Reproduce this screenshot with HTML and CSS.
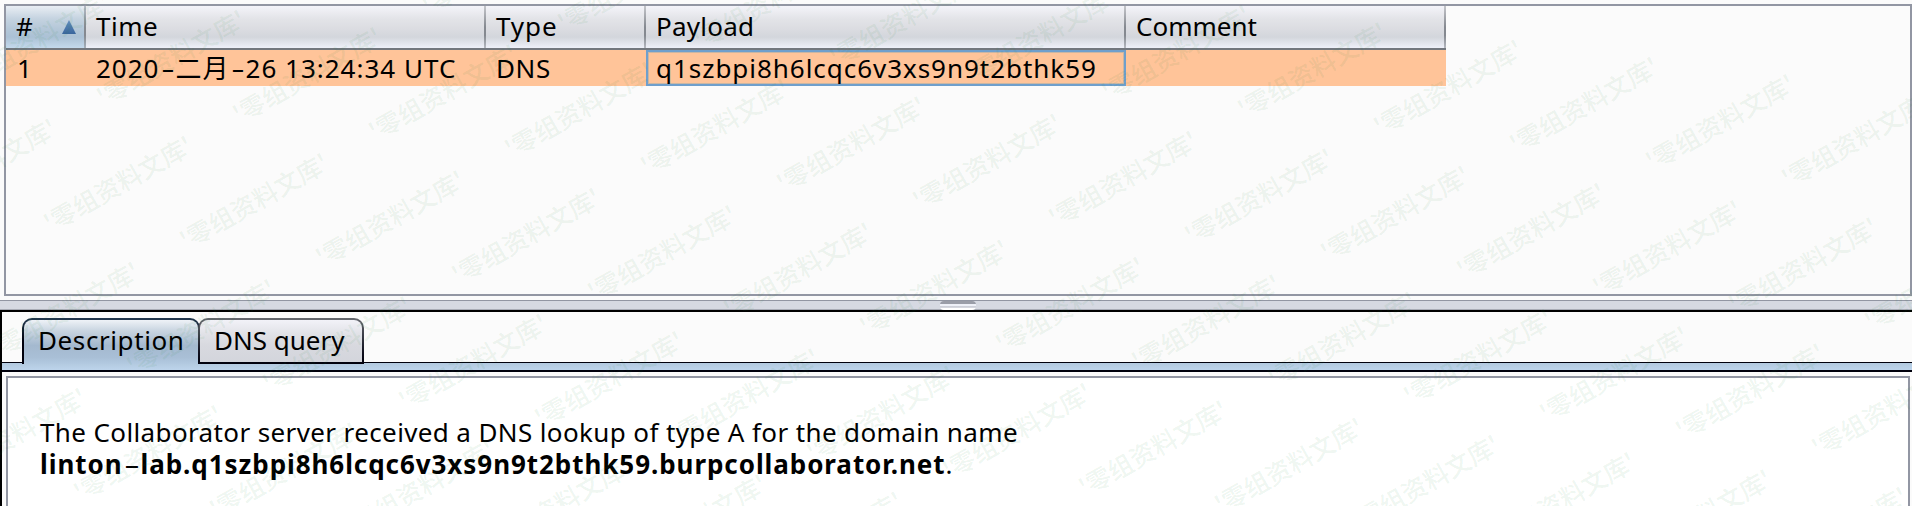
FILE: index.html
```
<!DOCTYPE html>
<html lang="en">
<head>
<meta charset="utf-8">
<title>Collaborator interactions</title>
<link rel="stylesheet" href="styles.css">
</head>
<body>
<div class="app">
  <section class="table-panel">
    <div class="grid header">
      <div class="th sorted"><span class="t-hash">#</span><svg class="sort" width="14" height="14" viewBox="0 0 14 14"><defs><linearGradient id="sg" x1="0" y1="0" x2="0" y2="1"><stop offset="0" stop-color="#6590c0"/><stop offset="1" stop-color="#39659c"/></linearGradient></defs><path d="M7 0L14 14H0Z" fill="url(#sg)"/></svg></div>
      <div class="th"><span class="t-time">Time</span></div>
      <div class="th"><span class="t-type">Type</span></div>
      <div class="th"><span class="t-payload">Payload</span></div>
      <div class="th"><span class="t-comment">Comment</span></div>
    </div>
    <div class="grid row">
      <div class="td num">1</div>
      <div class="td date">2020<span class="hyphen">-</span>二月<span class="hyphen">-</span>26 13:24:34 UTC</div>
      <div class="td t-dns">DNS</div>
      <div class="td selected">q1szbpi8h6lcqc6v3xs9n9t2bthk59</div>
      <div class="td"></div>
    </div>
  </section>
  <div class="splitter"><div class="grip"></div></div>
  <section class="detail">
    <div class="tabs">
      <div class="tab active"><span>Description</span></div>
      <div class="tab"><span>DNS query</span></div>
    </div>
    <div class="tab-band"></div>
    <div class="content">
      <p class="message">The Collaborator server received a DNS lookup of type A for the domain name<br><b>linton<span class="hyphen">-</span>lab.q1szbpi8h6lcqc6v3xs9n9t2bthk59.burpcollaborator.net</b>.</p>
    </div>
  </section>
  <svg class="watermark" id="watermark" width="1912" height="506"></svg>
</div>
<script src="watermark.js"></script>
</body>
</html>
```
FILE: styles.css
```
* { box-sizing: border-box; }
body {
  margin: 0;
  background: #fbfbfb;
  color: #000;
  font: 26px/36px "Noto Sans", "Noto Sans CJK SC", sans-serif;
  white-space: nowrap;
  overflow: hidden;
}
.app {
  position: relative;
  width: 1912px;
  height: 506px;
  padding-top: 4px;
  overflow: hidden;
}
.table-panel {
  height: 292px;
  margin-left: 4px;
  border: 2px solid #9296a3;
}
.grid {
  display: grid;
  grid-template-columns: 80px 400px 160px 480px 320px;
  width: 1440px;
}
.header {
  height: 44px;
  border-bottom: 2px solid #73777e;
}
.th {
  display: flex;
  justify-content: space-between;
  padding-left: 10px;
  line-height: 40px;
  background:
    linear-gradient(#c4c5ca, #858990 50%, #858990 70%, #b5b8c0) right / 2px 100% no-repeat,
    linear-gradient(#f4f4fa, #e3e4e8 30%, #dbdce1 55%, #d3d6dc 74%, #eef0f9);
}
.th.sorted {
  background:
    linear-gradient(#b4bcc6, #858990 50%, #858990 70%, #a5b0bc) right / 2px 100% no-repeat,
    linear-gradient(#e9eef4, #c5d3e0 30%, #b4c7d8 55%, #abc1d5 74%, #c4d9ec);
}
.sort { margin: 14px 10px 0 0; }
.t-time { letter-spacing: .5px; }
.t-type { letter-spacing: .9px; }
.t-payload { letter-spacing: .25px; }
.row { height: 36px; background: #ffc499; }
.td { padding-left: 10px; }
.num { padding-left: 11px; }
.date { letter-spacing: 1px; }
.t-dns { letter-spacing: .6px; }
.hyphen {
  display: inline-block;
  width: 16px;
  letter-spacing: 0;
  text-align: center;
  transform: scaleX(1.6);
}
.selected {
  padding-left: 8px;
  line-height: 32px;
  border: 2px solid #6f9fcc;
  box-shadow: inset 0 0 0 1px #c9b6a4;
  letter-spacing: .96px;
}
.splitter {
  height: 10px;
  margin-top: 4px;
  background: #d6d9e2;
  border-top: 1px solid #9296a3;
  border-bottom: 1px solid #a9acb6;
  display: flex;
  justify-content: center;
}
.grip {
  width: 36px;
  height: 9px;
  margin-left: 4px;
  border-radius: 4px;
  background: linear-gradient(#9a9da8 3px, #eef0f8 3px, #eef0f8 5px, #c9ccd5 5px, #d9dbe3 7px, #fff 7px);
}
.detail {
  height: 196px;
  border-top: 2px solid #000;
  border-left: 2px solid #000;
}
.tabs {
  height: 53px;
  padding: 6px 0 0 20px;
  display: flex;
  background: linear-gradient(#00000c, #00000c) 0 50px / 100% 1px no-repeat, #fbfbfb;
}
.tab {
  width: 166px;
  height: 46px;
  margin-left: -2px;
  padding: 2px;
  border-radius: 10px 10px 0 0;
  background: linear-gradient(#66696f, #10101f 75%, #00000c);
}
.tab span {
  display: block;
  height: 42px;
  line-height: 40px;
  padding-left: 14px;
  border-radius: 8px 8px 0 0;
  background: linear-gradient(#f2f2f8, #e0e1e6 35%, #d8d9df 60%, #d3d5dc);
}
.tab.active {
  position: relative;
  width: 178px;
  margin-left: 0;
  padding-bottom: 0;
  background: linear-gradient(#22384f, #00000c 50%);
}
.tab.active span {
  height: 44px;
  letter-spacing: .6px;
  background: linear-gradient(#eef2f7, #c8d4e0 25%, #a4b9cf 58%, #a9bfd6 85%, #b3cae1);
}
.tab-band {
  height: 7px;
  margin-top: -2px;
  background: linear-gradient(#b2c9df, #bdd4eb);
  box-shadow: 0 2px 0 #00000c;
}
.tab { z-index: 1; }
.content {
  height: 150px;
  margin: 6px 2px 0 4px;
  padding: 38px 0 0 32px;
  border: 2px solid #9296a3;
  background: #fff;
}
.message {
  margin: 0;
  line-height: 32px;
  letter-spacing: .38px;
}
.message b { letter-spacing: .94px; }
.message .hyphen { width: 18px; font-weight: 400; transform: scaleX(1.9); }
.watermark {
  position: absolute;
  inset: 0;
  z-index: 2;
  pointer-events: none;
  fill: rgba(30, 130, 50, .085);
  font: 500 25px "Noto Sans CJK SC", sans-serif;
  letter-spacing: .1px;
  text-anchor: middle;
}
```
FILE: watermark.js
```
const layer = document.getElementById('watermark');
for (let row = -2; row <= 4; row++) {
  for (let col = -3; col <= 17; col++) {
    const x = 118.5 + col * 136 - row * 53;
    const y = 184.5 + col * 17.3 + row * 126;
    if (x < -70 || x > 1980 || y < -40 || y > 546) continue;
    const mark = document.createElementNS('http://www.w3.org/2000/svg', 'text');
    mark.setAttribute('transform', `translate(${x} ${y}) rotate(-29.5)`);
    mark.setAttribute('dy', '9');
    mark.textContent = "'零组资料文库'";
    layer.appendChild(mark);
  }
}
```
